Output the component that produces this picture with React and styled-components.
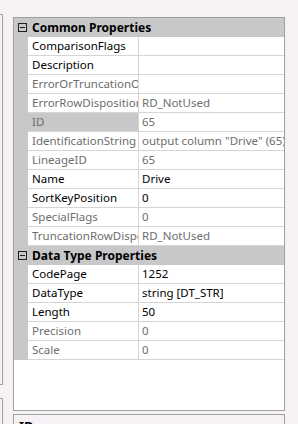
import React from 'react'
import styled, { createGlobalStyle } from 'styled-components'

const GlobalStyle = createGlobalStyle`
	html, body {
		margin: 0;
		padding: 0;
		background: #f6f1f5;
		overflow: hidden;
	}
	body {
		font-family: "Noto Sans", "Open Sans", sans-serif;
		font-size: 11.5px;
		color: #000;
	}
`

const common = [
	{ name: 'ComparisonFlags', value: '', on: true },
	{ name: 'Description', value: '', on: true },
	{ name: 'ErrorOrTruncationOperation', value: '' },
	{ name: 'ErrorRowDisposition', value: 'RD_NotUsed' },
	{ name: 'ID', value: '65', selected: true },
	{ name: 'IdentificationString', value: 'output column "Drive" (65)' },
	{ name: 'LineageID', value: '65' },
	{ name: 'Name', value: 'Drive', on: true },
	{ name: 'SortKeyPosition', value: '0', on: true },
	{ name: 'SpecialFlags', value: '0' },
	{ name: 'TruncationRowDisposition', value: 'RD_NotUsed' }
]

const dataType = [
	{ name: 'CodePage', value: '1252', on: true },
	{ name: 'DataType', value: 'string [DT_STR]', on: true },
	{ name: 'Length', value: '50', on: true },
	{ name: 'Precision', value: '0' },
	{ name: 'Scale', value: '0' }
]

function Category({ title, rows }) {
	return (
		<>
			<Header>
				<Gutter>
					<Toggle />
				</Gutter>
				<HeaderText>{title}</HeaderText>
			</Header>
			{rows.map(row => (
				<Row key={row.name}>
					<Gutter />
					<NameCell on={row.on} selected={row.selected}>
						{row.name}
					</NameCell>
					<ValueCell on={row.on}>{row.value}</ValueCell>
				</Row>
			))}
		</>
	)
}

export default function App() {
	return (
		<Page>
			<GlobalStyle />
			<LeftStrip>
				<TreeTop />
				<TreeBottom />
			</LeftStrip>
			<Main>
				<Grid>
					<Category title="Common Properties" rows={common} />
					<Category title="Data Type Properties" rows={dataType} />
				</Grid>
				<Description>
					<DescTitle>ID</DescTitle>
				</Description>
			</Main>
		</Page>
	)
}

const Page = styled.div`
	display: flex;
	width: 298px;
	height: 424px;
	overflow: hidden;
`
const LeftStrip = styled.div`
	width: 3px;
	display: flex;
	flex-direction: column;
	flex-shrink: 0;
`
const TreeTop = styled.div`
	margin-top: 14px;
	height: 371px;
	flex-shrink: 0;
	border: 1px solid #a0a0a0;
	border-left: none;
	box-sizing: border-box;
`
const TreeBottom = styled.div`
	margin-top: 13px;
	flex: 1;
	border: 1px solid #a0a0a0;
	border-left: none;
	border-bottom: none;
`
const Main = styled.div`
	margin-left: 10px;
	width: 272px;
	height: 424px;
	box-sizing: border-box;
	display: flex;
	flex-direction: column;
	gap: 3px;
	padding-top: 17px;
	overflow: hidden;
`
const Grid = styled.div`
	height: 394px;
	flex-shrink: 0;
	box-sizing: border-box;
	border: 1px solid #a0a0a0;
	background: #fff;
	display: flex;
	flex-direction: column;
	overflow: hidden;
`
const Header = styled.div`
	display: grid;
	grid-template-columns: 14px 1fr;
	height: 19px;
	background: #c8c8ca;
	flex-shrink: 0;
`
const Gutter = styled.div`
	background: #c8c8ca;
	display: flex;
	align-items: center;
	justify-content: center;
`
const Toggle = styled.div`
	width: 9px;
	height: 9px;
	box-sizing: border-box;
	border: 1px solid #1e1e1e;
	position: relative;
	margin-left: 2px;
	&::after {
		content: '';
		position: absolute;
		left: 1px;
		right: 1px;
		top: 3px;
		height: 1px;
		background: #1e1e1e;
	}
`
const HeaderText = styled.div`
	font-weight: 700;
	font-size: 12px;
	line-height: 19px;
	padding-left: 4px;
	white-space: nowrap;
`
const Row = styled.div`
	display: grid;
	grid-template-columns: 14px 111px 1fr;
	height: 19px;
	flex-shrink: 0;
`
const Cell = styled.div`
	box-sizing: border-box;
	border-bottom: 1px solid #d5d5d5;
	line-height: 18px;
	white-space: nowrap;
	overflow: hidden;
	color: ${props => (props.on ? '#000' : '#6d6d6d')};
`
const NameCell = styled(Cell)`
	padding-left: 4px;
	border-right: 1px solid #d5d5d5;
	background: ${props => (props.selected ? '#c8c8ca' : '#fff')};
`
const ValueCell = styled(Cell)`
	padding-left: 3px;
`
const Description = styled.div`
	flex: 1;
	min-height: 0;
	border: 1px solid #a0a0a0;
	border-bottom: none;
	padding: 3px 0 0 5px;
	overflow: hidden;
`
const DescTitle = styled.div`
	font-weight: 700;
	font-size: 13px;
	line-height: 16px;
`
